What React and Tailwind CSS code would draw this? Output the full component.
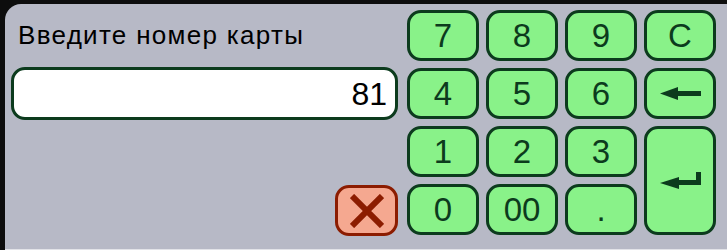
import React from "react";

const keys = [
  { label: "7" },
  { label: "8" },
  { label: "9" },
  { label: "C" },
  { label: "4" },
  { label: "5" },
  { label: "6" },
  { label: "back" },
  { label: "1" },
  { label: "2" },
  { label: "3" },
  { label: "enter" },
  { label: "0" },
  { label: "00" },
  { label: "." },
];

const BackArrow = () => (
  <svg width="41" height="13" viewBox="0 0 41 13">
    <polygon points="0,6.5 18,0 18,13" fill="#0c3b1d" />
    <rect x="18" y="4" width="23" height="5" fill="#0c3b1d" />
  </svg>
);

const EnterArrow = () => (
  <svg width="41" height="17" viewBox="0 0 41 17">
    <polygon points="0,11 19,5 19,17" fill="#0c3b1d" />
    <rect x="19" y="8" width="22" height="5" fill="#0c3b1d" />
    <rect x="36" y="0" width="5" height="13" fill="#0c3b1d" />
  </svg>
);

const Key = ({ label }) => {
  const isEnter = label === "enter";
  return (
    <button
      className={
        "flex items-center justify-center rounded-[14px] border-[3px] border-[#0c3b1d] bg-[#89f289] text-[33px] leading-none text-[#0c3b1d] " +
        (isEnter ? "row-span-2" : "")
      }
    >
      {label === "back" ? <BackArrow /> : isEnter ? <EnterArrow /> : label}
    </button>
  );
};

export default function App() {
  return (
    <div
      className="h-[250px] w-[727px] bg-[#0d0d0d] pt-[4px] pl-[5px]"
      style={{ fontFamily: '"Liberation Sans", Arial, sans-serif' }}
    >
      <div className="flex h-full gap-[9px] rounded-tl-[16px] border-b border-[#e2e3e8] bg-[#b7b9c6] pt-[6px] pl-[6px]">
        {/* LEFT */}
        <div className="grid w-[387px] grid-rows-[51px_52px_51px_51px] gap-y-[7px]">
          <div className="flex items-center pl-[7px] text-[26px] tracking-[1.3px] text-black">
            Введите номер карты
          </div>
          <div className="-mt-[1px] flex items-center justify-end rounded-[14px] border-[3px] border-[#0c3b1d] bg-white pr-[8px] text-[32px] leading-none text-black">
            81
          </div>
          <div />
          <div className="flex justify-end">
            <button className="flex h-[51px] w-[63px] items-center justify-center rounded-[14px] border-[3px] border-[#8c1c00] bg-[#f5a890]">
              <svg width="34" height="34" viewBox="0 0 34 34">
                <path
                  d="M2 2 L32 32 M32 2 L2 32"
                  stroke="#8c1c00"
                  strokeWidth="6"
                />
              </svg>
            </button>
          </div>
        </div>

        {/* KEYPAD */}
        <div className="grid grid-cols-[repeat(4,72px)] grid-rows-[repeat(4,51px)] gap-[7px]">
          {keys.map((k) => (
            <Key key={k.label} label={k.label} />
          ))}
        </div>
      </div>
    </div>
  );
}
